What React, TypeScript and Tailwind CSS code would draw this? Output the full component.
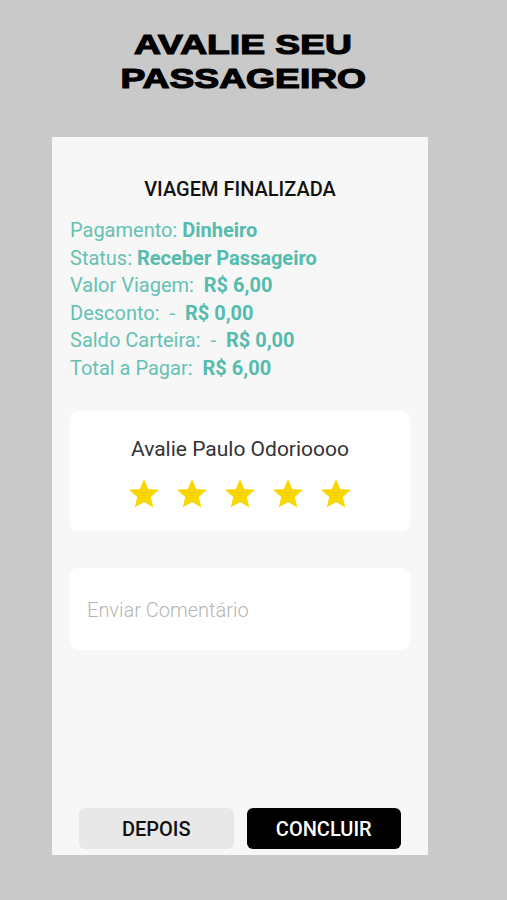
export default function App() {
  const lines: [string, string][] = [
    ["Pagamento: ", "Dinheiro"],
    ["Status: ", "Receber Passageiro"],
    ["Valor Viagem:  ", "R$ 6,00"],
    ["Desconto:  -  ", "R$ 0,00"],
    ["Saldo Carteira:  -  ", "R$ 0,00"],
    ["Total a Pagar:  ", "R$ 6,00"],
  ]

  return (
    <div className="min-h-[900px] w-full bg-[#c9c9c9] font-['Roboto',sans-serif]">
      {/* Title */}
      <div className="ml-[52px] w-[376px] pt-[28px] pl-[6px] text-center font-['Liberation_Sans',Arial,sans-serif] text-[28px] leading-[34px] font-bold text-black [-webkit-text-stroke:1.2px_black]">
        <div className="inline-block scale-x-[1.33]">AVALIE SEU</div>
        <br />
        <div className="inline-block scale-x-[1.33]">PASSAGEIRO</div>
      </div>

      {/* Panel */}
      <div className="mt-[41px] ml-[52px] flex h-[718px] w-[376px] flex-col bg-[#f7f7f7] px-[18px] pt-[40px] pb-[6px]">
        <h1 className="text-center text-[20px] leading-[24px] font-medium text-[#111]">VIAGEM FINALIZADA</h1>

        <div className="mt-[16px] text-[20px] leading-[27.6px] text-[#64c2b4]">
          {lines.map(([label, value], i) => (
            <div key={i} className="whitespace-pre">
              {label}
              <span className="font-bold text-[#55bcad]">{value}</span>
            </div>
          ))}
        </div>

        {/* Rating card */}
        <div className="mt-[28px] flex h-[120px] flex-col items-center rounded-lg bg-white pt-[26px]">
          <p className="text-[21px] leading-[24px] text-[#333]">Avalie Paulo Odorioooo</p>
          <div className="mt-[15px] flex gap-[12px]">
            {Array.from({ length: 5 }).map((_, i) => (
              <svg key={i} viewBox="0 0 24 24" className="h-[36px] w-[36px] fill-[#f8d700]">
                <path d="M12 17.27L18.18 21l-1.64-7.03L22 9.24l-7.19-.61L12 2 9.19 8.63 2 9.24l5.46 4.73L5.82 21z" strokeLinejoin="round" />
              </svg>
            ))}
          </div>
        </div>

        {/* Comment */}
        <div className="mt-[37px] flex h-[82px] items-center rounded-lg bg-white px-[17px] pt-[3px]">
          <span className="text-[20px] font-light text-[#b5b5b5]">Enviar Comentário</span>
        </div>

        {/* Buttons */}
        <div className="mt-auto flex gap-[13px] px-[9px]">
          <button className="h-[41px] flex-1 rounded-md bg-[#e8e8e8] text-[20px] font-medium text-[#111]">DEPOIS</button>
          <button className="h-[41px] flex-1 rounded-md bg-black text-[20px] font-medium text-white">CONCLUIR</button>
        </div>
      </div>
    </div>
  )
}
